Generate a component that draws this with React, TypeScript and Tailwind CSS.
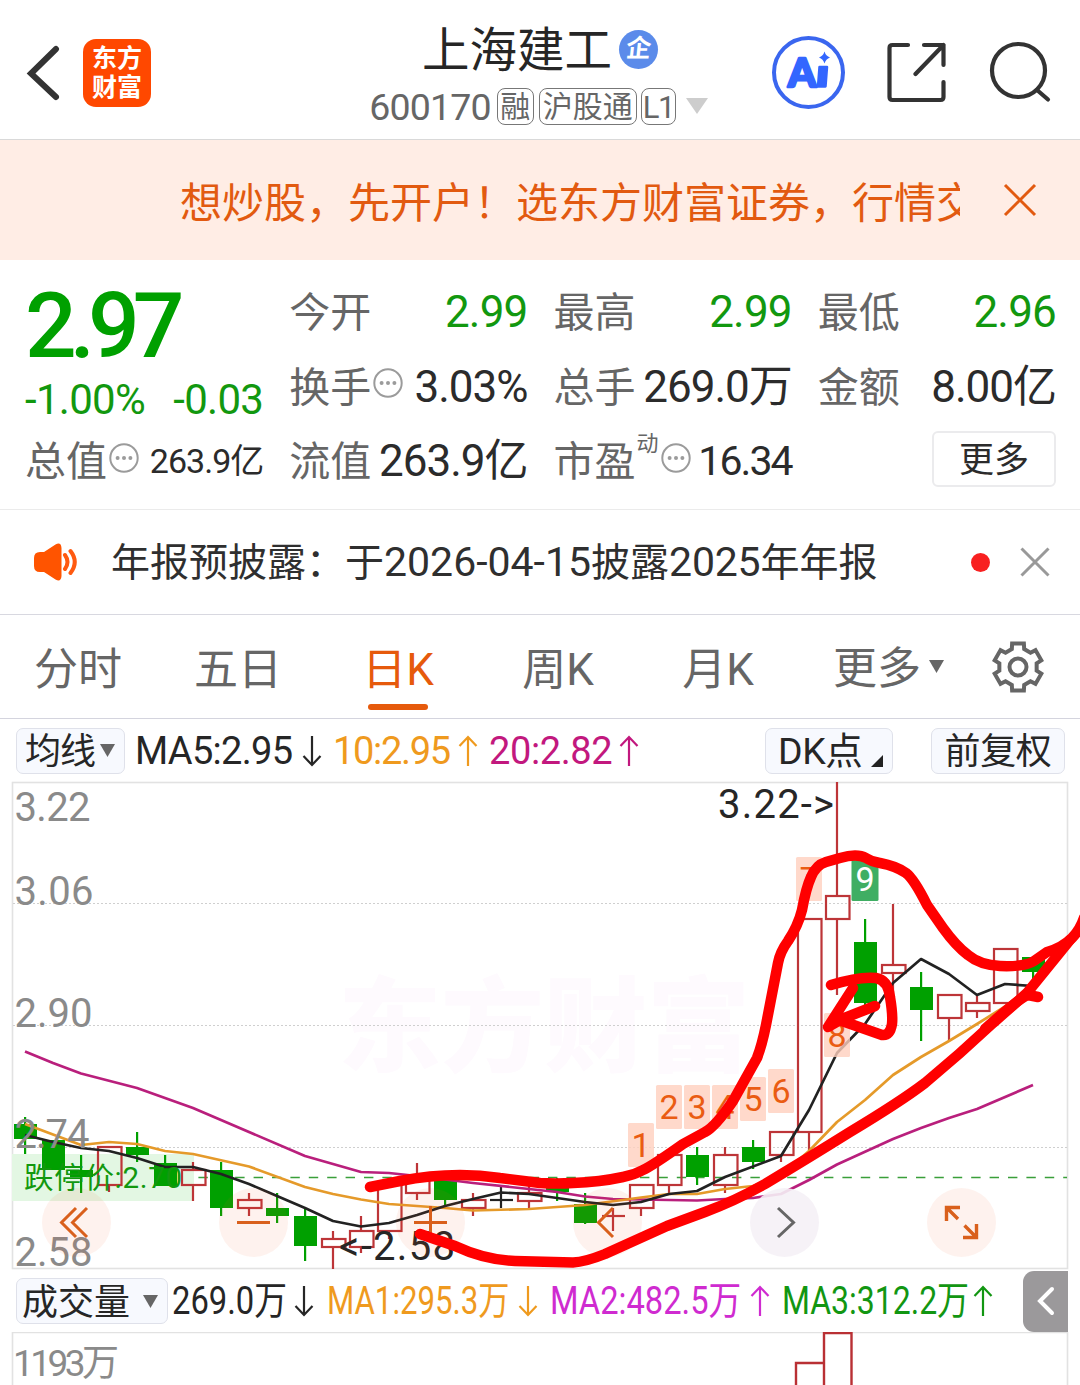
import type { ReactNode } from "react";
import clsx from "clsx";

const FONT = "font-['Roboto','Noto_Sans_CJK_SC',sans-serif]";

// ── Datos ────────────────────────────────────────────────────────────────

type Kind = "up" | "down" | "flat";
// [high, top, bottom, low, kind], one entry every 28px
type Candle = [number, number, number, number, Kind];

const STEP = 28;
const X0 = 25.5;

const CANDLES: Candle[] = [
  [1117, 1124, 1139, 1154, "down"],
  [1140, 1140, 1170, 1170, "down"],
  [1155, 1170, 1177, 1193, "down"],
  [1147, 1147, 1185, 1192, "up"],
  [1132, 1147, 1155, 1162, "down"],
  [1155, 1163, 1186, 1186, "down"],
  [1162, 1170, 1185, 1201, "up"],
  [1162, 1170, 1208, 1216, "down"],
  [1193, 1200, 1208, 1216, "up"],
  [1193, 1208, 1216, 1223, "down"],
  [1208, 1216, 1246, 1261, "down"],
  [1231, 1239, 1247, 1269, "up"],
  [1216, 1231, 1247, 1253, "up"],
  [1185, 1185, 1231, 1239, "up"],
  [1163, 1178, 1193, 1200, "up"],
  [1178, 1178, 1200, 1207, "down"],
  [1193, 1200, 1208, 1216, "up"],
  [1186, 1200, 1200, 1208, "flat"],
  [1186, 1193, 1201, 1208, "up"],
  [1178, 1180, 1192, 1201, "down"],
  [1193, 1204, 1223, 1224, "down"],
  [1208, 1216, 1216, 1231, "up"],
  [1185, 1185, 1208, 1216, "up"],
  [1155, 1155, 1185, 1193, "up"],
  [1147, 1155, 1177, 1185, "down"],
  [1147, 1155, 1185, 1193, "up"],
  [1140, 1147, 1162, 1169, "down"],
  [1132, 1132, 1155, 1162, "up"],
  [919, 919, 1132, 1158, "up"],
  [782, 896, 919, 995, "up"],
  [919, 942, 1003, 1009, "down"],
  [904, 965, 973, 1000, "up"],
  [972, 987, 1010, 1041, "down"],
  [995, 995, 1018, 1041, "up"],
  [995, 1003, 1011, 1018, "up"],
  [949, 949, 1003, 1003, "up"],
  [957, 957, 972, 985, "down"],
];

const MA5 =
  "25,1135 53,1142 81,1148 109,1151 137,1158 165,1167 193,1167 221,1174 249,1184 277,1196 305,1208 333,1221 361,1226.5 389,1223 417,1215 445,1206 473,1199 501,1192.5 529,1194 557,1198 585,1202 613,1205 641,1202 669,1194 697,1191 725,1177 781,1156 809,1110 837,1053 865,1024 893,983 921,959 949,974 977,995 1005,984 1033,986";
const MA10 =
  "25,1124 81,1145 109,1142 137,1144 165,1151 193,1154 249,1166.5 305,1187 333,1194 361,1199.5 389,1204 417,1206 445,1208 473,1210.5 529,1209 585,1205 641,1197.5 669,1194 697,1194 725,1189 753,1186 781,1175 809,1151 837,1122 865,1100 893,1075 921,1057 949,1041 977,1024 1033,989";
const MA20 =
  "25,1051.5 53,1063 81,1073.5 137,1088 193,1108 221,1120 305,1156 361,1172 389,1173 417,1176 473,1183 529,1189 557,1192 585,1196.5 613,1199 697,1200.5 725,1199 753,1198 781,1194 809,1180 837,1164.5 893,1139 921,1128 949,1118 977,1109 1033,1085";

const AXIS = [
  { label: "3.22", y: 820.5, w: 76 },
  { label: "3.06", y: 904.5, w: 79 },
  { label: "2.90", y: 1026.5, w: 78 },
  { label: "2.74", y: 1148, w: 75 },
  { label: "2.58", y: 1265.5, w: 78 },
];

const COUNTS = [
  { n: "1", x: 628, y: 1123 },
  { n: "2", x: 656, y: 1085 },
  { n: "3", x: 684, y: 1085 },
  { n: "4", x: 712, y: 1085 },
  { n: "5", x: 740, y: 1077 },
  { n: "6", x: 768, y: 1069 },
  { n: "7", x: 796, y: 857 },
  { n: "8", x: 824, y: 1013 },
];

const TABS = ["分时", "五日", "日K", "周K", "月K"];

// ── Small pieces ─────────────────────────────────────────────────────────

function Arrow({ up }: { up?: boolean }) {
  return (
    <svg width="20" height="32" viewBox="0 0 20 32" fill="none" stroke="currentColor" strokeWidth="2.2" className="shrink-0">
      <path d={up ? "M10 31V2M1.5 11L10 2l8.5 9" : "M10 1v29M1.5 21L10 30l8.5-9"} />
    </svg>
  );
}

function Caret({ className }: { className: string }) {
  return (
    <svg width="15" height="13" viewBox="0 0 15 13" className={className}>
      <path d="M0 0h15L7.500 13z" fill="#666" />
    </svg>
  );
}

function Dots() {
  return (
    <svg width="30" height="30" viewBox="0 0 30 30" className="mb-[10px] ml-[2px] shrink-0">
      <circle cx="15" cy="15" r="13.700" fill="none" stroke="#9b9b9b" strokeWidth="2" />
      <circle cx="8.600" cy="15" r="2" fill="#9b9b9b" />
      <circle cx="15" cy="15" r="2" fill="#9b9b9b" />
      <circle cx="21.400" cy="15" r="2" fill="#9b9b9b" />
    </svg>
  );
}

function Tag({ children, className }: { children: ReactNode; className: string }) {
  return (
    <span className={clsx("flex h-[37px] items-center justify-center rounded-[8px] border-[1.5px] border-[#777] pt-[2px] text-[#666]", className)}>
      {children}
    </span>
  );
}

function Cell({ label, value, className, extra }: { label: string; value: string; className?: string; extra?: ReactNode }) {
  return (
    <div className="flex h-[74.5px] items-center justify-between whitespace-nowrap">
      <span className="flex items-center pt-[3px] text-[41px] text-[#666]">
        {label}
        {extra}
      </span>
      <span className={clsx(className ?? "text-[44px] tracking-[-1px] text-[#2b2b2b]")}>{value}</span>
    </div>
  );
}

function Chip({ children, className }: { children: ReactNode; className: string }) {
  return (
    <div className={clsx("flex h-[46px] shrink-0 items-center rounded-[7px] border border-[#dfe1ea] bg-[#f7f9fe] pt-[3px] text-[36px] text-[#262626]", className)}>
      {children}
    </div>
  );
}

const GREEN = "text-[44px] tracking-[-0.8px] text-[#12980f]";

// ── Header ───────────────────────────────────────────────────────────────

function Header() {
  return (
    <header className="flex h-[140px] shrink-0 border-b border-[#d9d9d9]">
      <div className="flex w-[340px] items-center pl-[25px] pt-[6px]">
        <svg width="36" height="56" viewBox="0 0 36 56" fill="none" stroke="#333" strokeWidth="6" strokeLinecap="round" strokeLinejoin="miter">
          <path d="M31 4L6 28.500L31 52" />
        </svg>
        <div className="ml-[22px] flex h-[68px] w-[68px] flex-col items-center justify-center rounded-[13px] bg-[#ff4800] text-[25px] font-bold leading-[29px] text-white">
          <span>东方</span>
          <span>财富</span>
        </div>
      </div>
      <div className="flex w-[400px] flex-col items-center">
        <div className="mt-[22px] flex h-[54px] items-center text-[47.5px] leading-[54px] text-[#262626]">
          <span className="pt-[4px]">上海建工</span>
          <span className="ml-[7px] flex h-[39px] w-[39px] items-center justify-center rounded-full bg-[#5b8bea] text-[25px] font-bold text-white">
            <span className="-skew-x-6">企</span>
          </span>
        </div>
        <div className="mt-[11px] flex h-[38px] items-center text-[37.5px] text-[#666]">
          <span className="-ml-[3px] mr-[6px] pt-[4px] tracking-[-0.8px]">600170</span>
          <Tag className="mr-[5px] w-[37px] text-[30px]">融</Tag>
          <Tag className="mr-[4px] w-[98px] text-[30px]">沪股通</Tag>
          <Tag className="w-[35px] text-[31px] tracking-[-1.5px]">L1</Tag>
          <svg width="22" height="16" viewBox="0 0 22 16" className="ml-[10px]">
            <path d="M0 0h22L11 16z" fill="#cdcdcd" />
          </svg>
        </div>
      </div>
      <div className="flex w-[340px] items-center pl-[32px] pt-[5px]">
        <div className="flex h-[73px] w-[73px] items-center justify-center rounded-full border-[4px] border-[#3a66ef]">
          <svg width="46" height="42" viewBox="0 0 46 42" className="overflow-visible">
            <text x="2" y="35.500" fontFamily="Lato" fontWeight="900" fontSize="40" fill="#3366ff" stroke="#3366ff" strokeWidth="2.600" strokeLinejoin="round">A</text>
            <path d="M33.500 16h7.500l-1.500 19.500h-7.500z" fill="#3366ff" stroke="#3366ff" strokeWidth="2.500" strokeLinejoin="round" />
            <path d="M38.500 0.500q1.300 4.600 5.500 6-4.200 1.400-5.500 6-1.300-4.600-5.500-6 4.200-1.400 5.500-6z" fill="#3366ff" />
          </svg>
        </div>
        <svg width="60" height="62" viewBox="0 0 60 62" className="ml-[41px]" fill="none" stroke="#333" strokeWidth="4.200" strokeLinecap="round" strokeLinejoin="round">
          <path d="M22 4H6.500Q3.500 4 3.500 7V56q0 3 3 3H54.500q3 0 3-3V41" />
          <path d="M38 4H57.500V24M57.500 4L29.500 33" />
        </svg>
        <svg width="64" height="64" viewBox="0 0 64 64" className="ml-[43px]" fill="none" stroke="#333" strokeWidth="4.200" strokeLinecap="round">
          <circle cx="29.500" cy="30.500" r="26.500" />
          <path d="M48 50L59 59.500" />
        </svg>
      </div>
    </header>
  );
}

function Banner() {
  return (
    <div className="flex h-[120px] shrink-0 items-center bg-[#ffede5] pl-[180px] text-[#e25a10]">
      <div className="w-[780px] overflow-hidden whitespace-nowrap pt-[7px] text-[42px] leading-[60px]">想炒股，先开户！选东方财富证券，行情交易</div>
      <svg width="34" height="34" viewBox="0 0 34 34" className="ml-[43px]" stroke="currentColor" strokeWidth="3">
        <path d="M2 2l30 30M32 2L2 32" />
      </svg>
    </div>
  );
}

function Quote() {
  return (
    <section className="grid h-[250px] shrink-0 grid-cols-4 gap-x-[26px] border-b border-[#ebebeb] pl-[25px] pr-[24px] pt-[15px]">
      <div>
        <div className="h-[98px] pt-[2px] text-[91px] font-medium leading-[98px] tracking-[-7px] text-[#00a000]">2.97</div>
        <div className="flex h-[51px] items-center justify-between pt-[2px] text-[42px] tracking-[-0.7px] text-[#12980f]">
          <span>-1.00%</span>
          <span>-0.03</span>
        </div>
        <Cell label="总值" extra={<Dots />} value="263.9亿" className="text-[34px] tracking-[-1px] text-[#2b2b2b]" />
      </div>
      <div>
        <Cell label="今开" value="2.99" className={GREEN} />
        <Cell label="换手" extra={<Dots />} value="3.03%" />
        <Cell label="流值" value="263.9亿" />
      </div>
      <div>
        <Cell label="最高" value="2.99" className={GREEN} />
        <Cell label="总手" value="269.0万" />
        <Cell
          label="市盈"
          extra={
            <>
              <span className="mb-[38px] ml-[1px] w-[22px] text-[22px]">动</span>
              <Dots />
            </>
          }
          value="16.34"
          className="text-[41px] tracking-[-1.9px] text-[#2b2b2b]"
        />
      </div>
      <div>
        <Cell label="最低" value="2.96" className={GREEN} />
        <Cell label="金额" value="8.00亿" />
        <div className="flex h-[70px] items-center justify-end">
          <div className="flex h-[56px] w-[124px] items-center justify-center rounded-[6px] border-2 border-[#ebebed] pt-[3px] text-[35px] text-[#2b2b2b]">更多</div>
        </div>
      </div>
    </section>
  );
}

function Notice() {
  return (
    <div className="flex h-[105px] shrink-0 items-center border-b border-[#d8d8e0] pl-[34px]">
      <svg width="46" height="40" viewBox="0 0 46 40" className="shrink-0">
        <path d="M6 10H10L21.500 2.500Q27 -0.500 27.500 6V34Q27 40.500 21.500 37.500L10 30H6Q0 30 0 24V16Q0 10 6 10z" fill="#ff5400" />
        <path d="M31 13q5 7 0 14M36.500 9q8.500 11 0 22" fill="none" stroke="#ff5a10" strokeWidth="4" strokeLinecap="round" />
      </svg>
      <div className="ml-[31px] w-[860px] whitespace-nowrap pt-[1px] text-[39px] text-[#2f2f2f]">
        年报预披露：于<span className="text-[41px]">2026-04-15</span>披露<span className="text-[41px] tracking-[-0.2px]">2025</span>年年报
      </div>
      <span className="h-[19px] w-[19px] shrink-0 rounded-full bg-[#f82020]" />
      <svg width="30" height="30" viewBox="0 0 30 30" className="ml-[30px] shrink-0" stroke="#999" strokeWidth="3">
        <path d="M1.500 1.500l27 27M28.500 1.500l-27 27" />
      </svg>
    </div>
  );
}

function Gear() {
  const pts: string[] = [];
  for (let k = 0; k < 6; k++) {
    for (const [da, r] of [[-19, 19], [-14, 24.3], [14, 24.3], [19, 19]]) {
      const a = ((k * 60 - 90 + da) * Math.PI) / 180;
      pts.push(`${26 + r * Math.cos(a)},${26 + r * Math.sin(a)}`);
    }
  }
  return (
    <svg width="52" height="52" viewBox="0 0 52 52" fill="none" stroke="#666" strokeWidth="4">
      <polygon points={pts.join(" ")} />
      <circle cx="26" cy="26" r="8.500" />
    </svg>
  );
}

function Tabs() {
  return (
    <nav className="flex h-[104px] shrink-0 border-b border-[#d4d4de] text-[44px] text-[#666]">
      <div className="-ml-[2px] flex">
        {TABS.map((t) => (
          <div key={t} className={clsx("flex w-[160px] flex-col items-center", t === "日K" && "text-[#e65a0c]")}>
            <span className="mt-[22px] h-[67px] leading-[66px]">{t}</span>
            {t === "日K" && <span className="h-[6px] w-[60px] rounded-full bg-[#e65a0c]" />}
          </div>
        ))}
      </div>
      <div className="ml-[35px] flex items-center">
        <span className="pt-[5px]">更多</span>
        <Caret className="ml-[8px]" />
      </div>
      <div className="ml-[48px] flex items-center">
        <Gear />
      </div>
    </nav>
  );
}

function MaBar() {
  return (
    <div className="flex h-[63px] shrink-0 items-center whitespace-nowrap pl-[16px] text-[38px] tracking-[-0.4px]">
      <Chip className="w-[109px] pl-[8px]">
        <span className="tracking-[-1px]">均线</span>
        <Caret className="mb-[4px] ml-[5px]" />
      </Chip>
      <span className="ml-[10px] flex w-[198px] items-center text-[#262626]">
        <span className="w-[167px] tracking-[-0.7px]">MA5:2.95</span>
        <Arrow />
      </span>
      <span className="flex w-[156px] items-center text-[#ef9a1e]">
        <span className="w-[125px] tracking-[-1.3px]">10:2.95</span>
        <Arrow up />
      </span>
      <span className="flex w-[276px] items-center text-[#c2187e]">
        <span className="w-[130px]">20:2.82</span>
        <Arrow up />
      </span>
      <Chip className="w-[128px] pl-[12px]">
        <span className="text-[37.5px]">DK点</span>
        <svg width="12" height="12" viewBox="0 0 12 12" className="ml-[9px] mt-[17px]">
          <path d="M12 0v12H0z" fill="#222" />
        </svg>
      </Chip>
      <Chip className="ml-[38px] w-[134px] justify-center">前复权</Chip>
    </div>
  );
}

// ── Chart ────────────────────────────────────────────────────────────────

function CandleShape({ c, i }: { c: Candle; i: number }) {
  const [high, top, bottom, low, kind] = c;
  const x = X0 + i * STEP;
  if (kind === "down") {
    return (
      <g fill="#00a000">
        <rect x={x - 1.5} y={high} width="2.200" height={low - high} />
        <rect x={x - 11.5} y={top} width="23" height={bottom - top} />
      </g>
    );
  }
  const color = kind === "flat" ? "#222" : "#bd3538";
  return (
    <g stroke={color} strokeWidth="2.200" fill="none">
      <path d={`M${x - 0.5} ${high}V${top}M${x - 0.5} ${bottom}V${low}`} />
      {top === bottom ? (
        <path d={`M${x - 11.5} ${top}h23`} />
      ) : (
        <rect x={x - 11.5} y={top} width="23.500" height={bottom - top} />
      )}
    </g>
  );
}

function KChart() {
  return (
    <svg width="1080" height="488" viewBox="0 782 1080 488" className="block shrink-0 overflow-visible font-['Roboto','Noto_Sans_CJK_SC',sans-serif]">
      <text x="338" y="1064" fontSize="103" fontWeight="900" fill="#fefafe">东方财富</text>
      <rect x="12.500" y="782.500" width="1055" height="486" fill="none" stroke="#e2e2e2" strokeWidth="1.600" />
      <path d="M13 903.500H1067M13 1025.500H1067M13 1147.500H1067" stroke="#cfcfcf" strokeDasharray="2 2" />
      <rect x="12" y="1154" width="182" height="47" fill="#e3f7e3" />
      <path d="M198.400 1177.500H1067" stroke="#3a9f3a" strokeWidth="1.300" strokeDasharray="9.400 9" />

      {CANDLES.map((c, i) => (
        <CandleShape key={i} c={c} i={i} />
      ))}

      <g fill="none" strokeWidth="2.700" strokeLinejoin="round">
        <polyline points={MA20} stroke="#b91f7c" />
        <polyline points={MA10} stroke="#e59a2a" />
        <polyline points={MA5} stroke="#222" />
      </g>

      <text x="24" y="1188" fontSize="29.500" fill="#12980f" textLength="158">跌停价:2.70</text>
      {AXIS.map((a) => (
        <text key={a.label} x="14.500" y={a.y} fontSize="40" fill="#8a8a8a" textLength={a.w}>{a.label}</text>
      ))}

      {/* contadores 1-9 */}
      {COUNTS.map((c) => (
        <g key={c.n}>
          <rect x={c.x} y={c.y} width="26" height="44" rx="1.500" fill="#ffd0be" fillOpacity="0.8" />
          <text x={c.x + 13} y={c.y + 33.5} fontSize="34" textAnchor="middle" fill="#ea5c12">{c.n}</text>
        </g>
      ))}
      <rect x="851.500" y="857" width="27" height="44" rx="1.500" fill="#3fae63" />
      <text x="865" y="890.500" fontSize="34" textAnchor="middle" fill="#fff">9</text>

      <text x="718" y="818" fontSize="40" fill="#262626" textLength="116">3.22-&gt;</text>
      <text x="339" y="1260" fontSize="40" fill="#262626" textLength="116">&lt;-2.58</text>

      {/* chart controls */}
      <g fill="#f05a28" fillOpacity="0.08">
        <circle cx="76.500" cy="1222.500" r="34.500" />
        <circle cx="253.500" cy="1222.500" r="34.500" />
        <circle cx="430.500" cy="1222.500" r="34.500" />
        <circle cx="607.500" cy="1222.500" r="34.500" />
        <circle cx="961.500" cy="1222.500" r="34.500" />
      </g>
      <circle cx="784.500" cy="1222.500" r="34.500" fill="#f5f1f6" fillOpacity="0.9" />
      <g fill="none" stroke="#d9601c" strokeWidth="3">
        <path d="M76 1208L61.500 1222.500L76 1237M87 1208L72.500 1222.500L87 1237" />
        <path d="M237 1222.500h33" />
        <path d="M414 1222.500h33M430.500 1206v33" />
        <path d="M613 1208L598.500 1222.500L613 1237" />
        <path d="M778 1208L793.500 1222.500L778 1237" stroke="#666" />
        <path d="M946.500 1221V1207.500H960M946.500 1207.500L958 1219M963 1237.500H976.500V1224M976.500 1237.500L964.500 1225.500" strokeWidth="3.400" />
      </g>

      {/* hand-drawn marks */}
      <g fill="none" stroke="#f00" strokeWidth="10.500" strokeLinecap="round" strokeLinejoin="round">
        <path d="M370 1187L400 1181Q430 1175 460 1175Q480 1175 500 1178L540 1183Q556 1184 573 1183Q600 1182 623 1177Q634 1175 643 1170Q652 1166 683 1144L705 1132Q715 1127 733 1101L757 1058Q762 1045 766 1025L778 963Q780 952 788 941Q798 926 802 910Q806 888 811 877Q816 865 826 862L840 858Q857 853 866 858Q872 862 880 863Q896 866 906 873Q914 879 927 905L943 928Q956 946 968 955Q980 965 1000 966Q1025 967 1034 961L1047 952Q1062 948 1072 938Q1080 930 1084 918" />
        <path d="M420 1234L455 1246Q485 1260 515 1261L573 1262.500Q585 1262 605 1254L667 1226L705 1212Q735 1201 765 1184Q810 1157 850 1132Q900 1102 925 1083Q960 1054 993 1023L1027 993L1070 940" />
        <path d="M985 1029Q1018 999 1028 995L1038 997" />
        <path d="M831 985Q860 976 876 978Q888 980 890 997Q893 1015 892 1024Q890 1036 882 1035L842 1021" />
        <path d="M853 988L828 1027L842 1019L875 1006" />
      </g>
    </svg>
  );
}

function VolumeBar() {
  return (
    <div className="flex h-[62px] shrink-0 items-center whitespace-nowrap pl-[16px] text-[39px]">
      <Chip className="w-[152px] pl-[5px]">
        成交量
        <Caret className="mb-[3px] ml-[13px]" />
      </Chip>
      <span className="ml-[4px] flex w-[155px] items-center text-[#262626]">
        <span className="w-[122px] origin-left scale-x-[0.84]">269.0万</span>
        <Arrow />
      </span>
      <span className="flex w-[223px] items-center text-[#ef9a1e]">
        <span className="w-[191px] origin-left scale-x-[0.8]">MA1:295.3万</span>
        <Arrow />
      </span>
      <span className="flex w-[232px] items-center text-[#cf2bd0]">
        <span className="w-[200px] origin-left scale-x-[0.838]">MA2:482.5万</span>
        <Arrow up />
      </span>
      <span className="flex w-[241px] items-center text-[#129612]">
        <span className="w-[191px] origin-left scale-x-[0.82]">MA3:312.2万</span>
        <Arrow up />
      </span>
      <div className="flex h-[61px] w-[45px] items-center justify-center rounded-l-[11px] bg-[#9b999b]">
        <svg width="18" height="30" viewBox="0 0 18 30" fill="none" stroke="#fff" strokeWidth="4" strokeLinecap="round">
          <path d="M15 3L3 15l12 12" />
        </svg>
      </div>
    </div>
  );
}

function VolumeChart() {
  return (
    <svg width="1080" height="53" viewBox="0 1332 1080 53" className="block shrink-0 font-['Roboto','Noto_Sans_CJK_SC',sans-serif]">
      <path d="M12.500 1385V1332.500H1067.500V1385" fill="none" stroke="#e2e2e2" strokeWidth="1.600" />
      <text x="13" y="1375.500" fontSize="37" fill="#8a8a8a" textLength="106">1193万</text>
      <path d="M796 1385V1363H823.500M824 1385V1333H851.500V1385" fill="none" stroke="#b93034" strokeWidth="2.400" />
    </svg>
  );
}

export default function App() {
  return (
    <div className={clsx("flex h-[1385px] w-[1080px] flex-col overflow-hidden bg-white leading-none", FONT)}>
      <Header />
      <Banner />
      <Quote />
      <Notice />
      <Tabs />
      <MaBar />
      <KChart />
      <VolumeBar />
      <VolumeChart />
    </div>
  );
}
